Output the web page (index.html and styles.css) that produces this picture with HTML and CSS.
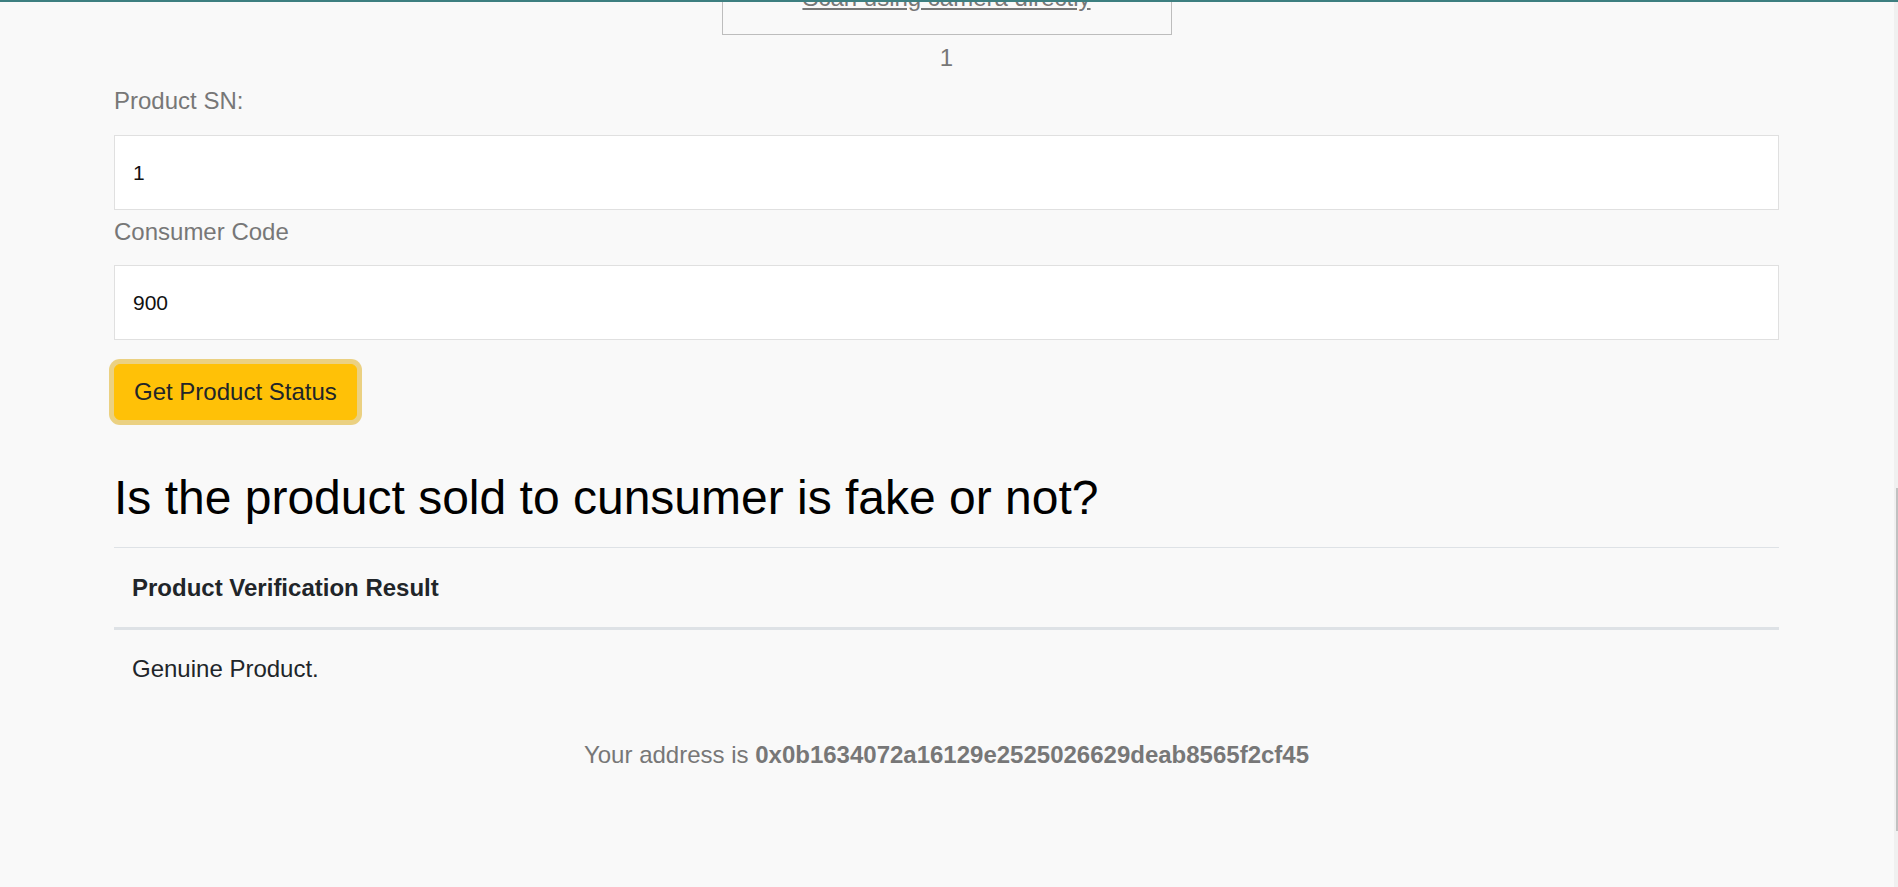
FILE: index.html
```html
<!DOCTYPE html>
<html lang="en">
<head>
<meta charset="utf-8">
<title>Product Verification</title>
<link rel="stylesheet" href="styles.css">
</head>
<body>
<div class="topline"></div>
<div class="scrollbar"><div class="thumb"></div></div>
<main class="page">
  <div class="container">
    <div class="scanbox"><a href="#" class="scanlink">Scan using camera directly</a></div>
    <p class="scanresult">1</p>
    <form class="form">
      <label class="label label-first" for="sn">Product SN:</label>
      <input class="field" id="sn" type="text" value="1">
      <label class="label label-next" for="cc">Consumer Code</label>
      <input class="field" id="cc" type="text" value="900">
      <button type="button" class="btn-status">Get Product Status</button>
    </form>
    <h2 class="title">Is the product sold to cunsumer is fake or not?</h2>
    <table class="result">
      <thead>
        <tr><th>Product Verification Result</th></tr>
      </thead>
      <tbody>
        <tr><td>Genuine Product.</td></tr>
      </tbody>
    </table>
    <p class="address">Your address is <b>0x0b1634072a16129e2525026629deab8565f2cf45</b></p>
  </div>
</main>
</body>
</html>
```

FILE: styles.css
```css
html, body {
  margin: 0;
  padding: 0;
  background: #f9f9f9;
  font-family: "Liberation Sans", Arial, sans-serif;
  font-size: 24px;
  line-height: 36px;
  color: #212529;
}

.topline {
  position: fixed;
  top: 0;
  left: 0;
  right: 0;
  height: 2px;
  background: #3d7f80;
  z-index: 10;
}

.scrollbar {
  position: fixed;
  top: 2px;
  right: 0;
  bottom: 0;
  width: 4px;
  background: #f0f0f0;
}

.scrollbar .thumb {
  margin-top: 486px;
  margin-left: 2px;
  width: 2px;
  height: 343px;
  background: #c1c1c1;
}

.page {
  margin-right: 5px;
  overflow: hidden;
}

.container {
  width: 1665px;
  margin: 0 auto;
}

.scanbox {
  width: 450px;
  box-sizing: border-box;
  margin: -39px auto 0;
  padding: 18px;
  border: 1px solid #bdbdbd;
  text-align: center;
}

.scanlink {
  color: #777;
  text-decoration: underline;
}

.scanresult {
  margin: 5px 0 0;
  text-align: center;
  color: #777;
}

.form {
  display: flex;
  flex-direction: column;
  align-items: flex-start;
}

.label {
  display: block;
  color: #777;
  margin-bottom: 16px;
}

.label-first {
  margin-top: 7px;
}

.label-next {
  margin-top: 4px;
  margin-bottom: 15px;
}

.field {
  display: block;
  width: 100%;
  box-sizing: border-box;
  height: 75px;
  padding: 0 18px;
  border: 1px solid #e0e0e0;
  background: #fff;
  font-family: "Liberation Sans", Arial, sans-serif;
  font-size: 21px;
  color: #111;
  outline: none;
  margin: 0;
}

.btn-status {
  margin-top: 24px;
  height: 56px;
  padding: 0 19px;
  border: 1px solid #ffc107;
  border-radius: 6px;
  background: #ffc107;
  color: #212529;
  font-family: "Liberation Sans", Arial, sans-serif;
  font-size: 24px;
  line-height: 36px;
  box-shadow: 0 0 0 5px rgba(222, 170, 12, 0.5);
  cursor: pointer;
}

.title {
  margin: 49px 0 20px;
  font-size: 48px;
  line-height: 58px;
  font-weight: 400;
  color: #000;
}

.result {
  width: 100%;
  border-collapse: collapse;
}

.result th {
  text-align: left;
  font-weight: 700;
  padding: 22px 18px 21px;
  border-top: 1px solid #dee2e6;
  border-bottom: 3px solid #dee2e6;
}

.result td {
  padding: 21px 18px 21px;
}

.address {
  margin: 29px 0 0;
  text-align: center;
  color: #777;
}
```
